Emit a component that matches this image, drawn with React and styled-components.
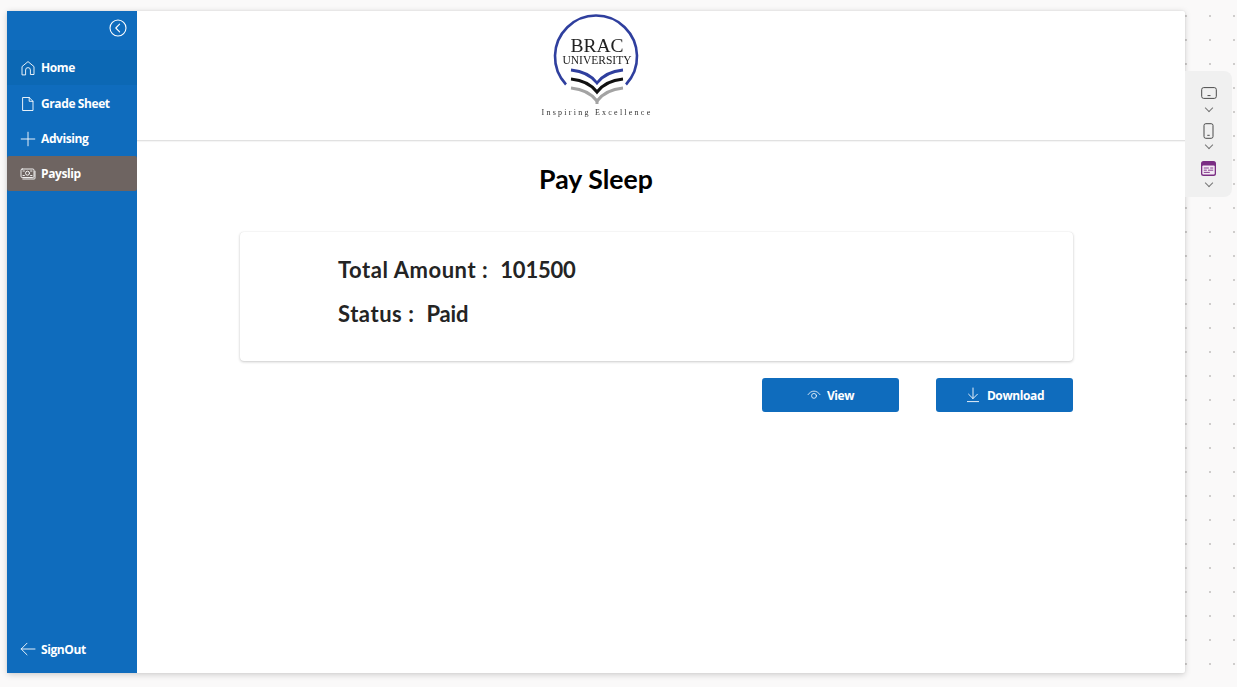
import React from "react";
import styled, { createGlobalStyle } from "styled-components";

const GlobalStyle = createGlobalStyle`
  html, body {
    margin: 0;
    height: 100%;
  }
  body {
    background-color: #faf9f9;
    background-image: radial-gradient(circle at 2px 2px, #cfcdcc 1px, transparent 1.5px);
    background-size: 24px 24px;
    background-position: 1184px 14px;
    font-family: "Open Sans", "Noto Sans", sans-serif;
    overflow: hidden;
  }
`;

const Ico = ({ size = 16, children }) => (
  <svg width={size} height={size} viewBox="0 0 16 16" fill="none" stroke="currentColor" strokeWidth="0.9" strokeLinecap="round" strokeLinejoin="round">
    {children}
  </svg>
);

const navItems = [
  {
    label: "Home",
    kind: "current",
    icon: <path d="M2 14.5V6.6L8 1.6l6 5v7.9h-3.6V10a2.4 2.4 0 0 0-4.8 0v4.5z" />,
  },
  {
    label: "Grade Sheet",
    icon: <path d="M3 1.5h6.2L13 5.3v9.2H3zM9.2 1.5v3.8H13" />,
  },
  {
    label: "Advising",
    icon: <path d="M8 1.2v13.6M1.2 8h13.6" />,
  },
  {
    label: "Payslip",
    kind: "selected",
    icon: (
      <>
        <rect x="1" y="3" width="13" height="8.5" rx="1.2" />
        <circle cx="7.5" cy="7.2" r="2" />
        <path d="M3 5h1.4M3 9.5h1.4M10.6 5H12M10.6 9.5H12M2.8 13h11.4a.8.8 0 0 0 .8-.8V5.2" />
      </>
    ),
  },
];

export default function App() {
  return (
    <>
      <GlobalStyle />
      <Page>
        <Shell>
          <Sidebar>
            <CollapseRow>
              <CollapseButton aria-label="Collapse">
                <svg width="18" height="18" viewBox="0 0 18 18" fill="none" stroke="currentColor" strokeWidth="1.1">
                  <circle cx="9" cy="9" r="8" />
                  <path d="M10.6 5.2 6.8 9l3.8 3.8" strokeLinecap="round" strokeLinejoin="round" />
                </svg>
              </CollapseButton>
            </CollapseRow>
            <Nav>
              {navItems.map((item) => (
                <NavItem key={item.label} $kind={item.kind}>
                  <Ico>{item.icon}</Ico>
                  <span>{item.label}</span>
                </NavItem>
              ))}
            </Nav>
            <SignOut>
              <Ico>
                <path d="M15 8H1.2M7 2.2 1.2 8 7 13.8" />
              </Ico>
              <span>SignOut</span>
            </SignOut>
          </Sidebar>
          <Main>
            <Header>
              <Logo viewBox="0 0 116 106" width="116" height="106">
                <path d="M28 71.5A41 41 0 1 1 88 71.5" fill="none" stroke="#2f3f9e" strokeWidth="2.6" />
                <text x="59" y="39" textAnchor="middle" fontFamily="'Liberation Serif', serif" fontSize="19.5" fill="#222">BRAC</text>
                <text x="59" y="51" textAnchor="middle" fontFamily="'Liberation Serif', serif" fontSize="11.5" fill="#222">UNIVERSITY</text>
                <path d="M33 57c10 1 20 5 26 13 6-8 16-12 26-13" fill="none" stroke="#2f3f9e" strokeWidth="2.8" />
                <path d="M33 66c10 1 20 5 26 13 6-8 16-12 26-13" fill="none" stroke="#111" strokeWidth="3" />
                <path d="M33 75c10 1 20 5 26 13 6-8 16-12 26-13" fill="none" stroke="#a3a3a3" strokeWidth="3" />
                <path d="M59 86v5" stroke="#a3a3a3" strokeWidth="3" />
                <text x="59" y="102" textAnchor="middle" fontFamily="'Liberation Serif', serif" fontSize="8" letterSpacing="2.25" fill="#333">Inspiring Excellence</text>
              </Logo>
            </Header>
            <Content>
              <Title>Pay Sleep</Title>
              <Column>
                <Card>
                  <Line>
                    <Label>Total Amount :</Label>
                    <Value>101500</Value>
                  </Line>
                  <Line>
                    <Label>Status :</Label>
                    <Value>Paid</Value>
                  </Line>
                </Card>
                <Actions>
                  <ActionButton>
                    <Ico size={14}>
                      <path d="M1.2 7.6C3 5 5.3 3.6 8 3.6s5 1.4 6.8 4" />
                      <circle cx="8" cy="9" r="2.8" />
                    </Ico>
                    View
                  </ActionButton>
                  <ActionButton>
                    <Ico>
                      <path d="M8 1v10.5M3.6 7.2 8 11.6l4.4-4.4M2.4 14.6h11.2" />
                    </Ico>
                    Download
                  </ActionButton>
                </Actions>
              </Column>
            </Content>
          </Main>
        </Shell>
        <Rail>
          <RailIcon>
            <svg width="16" height="12" viewBox="0 0 16 12" fill="none" stroke="#4a4a4a" strokeWidth="1">
              <rect x="0.7" y="0.6" width="14.6" height="10.8" rx="2" />
              <path d="M6.5 8.6h3" />
            </svg>
          </RailIcon>
          <RailChevron />
          <RailIcon>
            <svg width="11" height="16" viewBox="0 0 11 16" fill="none" stroke="#4a4a4a" strokeWidth="1">
              <rect x="1" y="0.7" width="9" height="14.6" rx="1.8" />
              <path d="M4.3 12.3h2.4" />
            </svg>
          </RailIcon>
          <RailChevron />
          <RailIcon>
            <svg width="15" height="15" viewBox="0 0 15 15">
              <rect width="15" height="15" rx="2.5" fill="#7a2d83" />
              <rect x="1.3" y="4.6" width="12.4" height="9" rx="1" fill="#f3e9f4" />
              <path d="M2.8 7h5M9.2 7h3M2.8 9.2h3M7 9.2h5.2M2.8 11.4h6" stroke="#7a2d83" strokeWidth="0.9" />
            </svg>
          </RailIcon>
          <RailChevron />
        </Rail>
      </Page>
    </>
  );
}

const Page = styled.div`
  display: flex;
  align-items: flex-start;
  height: 687px;
  padding: 11px 0 0 7px;
  box-sizing: border-box;
`;

const Shell = styled.div`
  display: flex;
  width: 1178px;
  height: 662px;
  background: #fff;
  border-radius: 2px;
  box-shadow: 0 1.6px 6px rgba(0, 0, 0, 0.16), 0 0 2px rgba(0, 0, 0, 0.08);
`;

const Sidebar = styled.aside`
  display: flex;
  flex-direction: column;
  width: 130px;
  flex-shrink: 0;
  background: #0f6cbd;
  color: #fff;
  font-size: 12px;
  font-weight: 700;
  letter-spacing: -0.4px;
`;

const CollapseRow = styled.div`
  display: flex;
  justify-content: flex-end;
  height: 39px;
  padding: 8px 10px 0 0;
  box-sizing: border-box;
`;

const CollapseButton = styled.button`
  display: flex;
  padding: 0;
  border: 0;
  background: none;
  color: #fff;
`;

const Nav = styled.nav`
  display: flex;
  flex-direction: column;
  flex: 1;
`;

const NavItem = styled.div`
  display: flex;
  align-items: center;
  gap: 5px;
  height: 35px;
  padding: 0 0 0 13px;
  margin-bottom: ${(p) => (p.$kind === "current" ? "1px" : "0")};
  border-radius: ${(p) => (p.$kind === "selected" ? "2px" : "0")};
  background: ${(p) =>
    p.$kind === "current"
      ? "#0c68b4"
      : p.$kind === "selected"
        ? "#6e6461"
        : "transparent"};
`;

const SignOut = styled.div`
  display: flex;
  align-items: center;
  gap: 5px;
  height: 48px;
  padding: 0 0 0 13px;
`;

const Main = styled.main`
  display: flex;
  flex-direction: column;
  flex: 1;
`;

const Header = styled.header`
  display: flex;
  justify-content: center;
  height: 130px;
  padding: 2px 130px 0 0;
  box-sizing: border-box;
  border-bottom: 1px solid #e1e1e1;
  box-shadow: 0 1px 1px rgba(0, 0, 0, 0.04);
`;

const Logo = styled.svg`
  display: block;
  filter: blur(0.25px);
`;

const Content = styled.section`
  display: flex;
  flex-direction: column;
  align-items: center;
`;

const Title = styled.h1`
  margin: 22px 130px 0 0;
  font-family: Lato, sans-serif;
  font-size: 26.67px;
  line-height: 32px;
  font-weight: 700;
  color: #000;
`;

const Column = styled.div`
  display: flex;
  flex-direction: column;
  width: 833px;
  margin: 37px 0 0 -9px;
`;

const Card = styled.div`
  display: flex;
  flex-direction: column;
  gap: 14px;
  height: 129px;
  padding: 23px 0 0 98px;
  box-sizing: border-box;
  background: #fff;
  border-radius: 4px;
  box-shadow: 0 1px 3px rgba(0, 0, 0, 0.2), 0 0 1px rgba(0, 0, 0, 0.12);
`;

const Line = styled.div`
  display: flex;
  gap: 12px;
  font-family: Lato, sans-serif;
  font-size: 22px;
  line-height: 30px;
  font-weight: 700;
  color: #242424;
`;

const Label = styled.span`
  letter-spacing: 0.55px;
`;

const Value = styled.span`
  letter-spacing: -0.2px;
`;

const Actions = styled.div`
  display: flex;
  justify-content: flex-end;
  gap: 37px;
  margin-top: 17px;
`;

const ActionButton = styled.button`
  display: flex;
  align-items: center;
  justify-content: center;
  gap: 6px;
  width: 137px;
  height: 34px;
  padding: 0;
  border: 0;
  border-radius: 3px;
  background: #0f6cbd;
  color: #fff;
  font-family: "Open Sans", sans-serif;
  font-size: 12px;
  font-weight: 700;
  letter-spacing: -0.4px;
`;

const Rail = styled.div`
  display: flex;
  flex-direction: column;
  align-items: center;
  width: 47px;
  height: 126px;
  margin-top: 60px;
  padding-top: 13px;
  box-sizing: border-box;
  background: #f0f0f0;
  border-radius: 0 8px 8px 0;
`;

const RailIcon = styled.div`
  display: flex;
  align-items: center;
  justify-content: center;
  height: 18px;
  width: 100%;
`;

const RailChevron = styled.span`
  flex-shrink: 0;
  width: 6px;
  height: 6px;
  margin: 3px 0 11px;
  border-right: 1px solid #777;
  border-bottom: 1px solid #777;
  box-sizing: border-box;
  transform: rotate(45deg);
`;
